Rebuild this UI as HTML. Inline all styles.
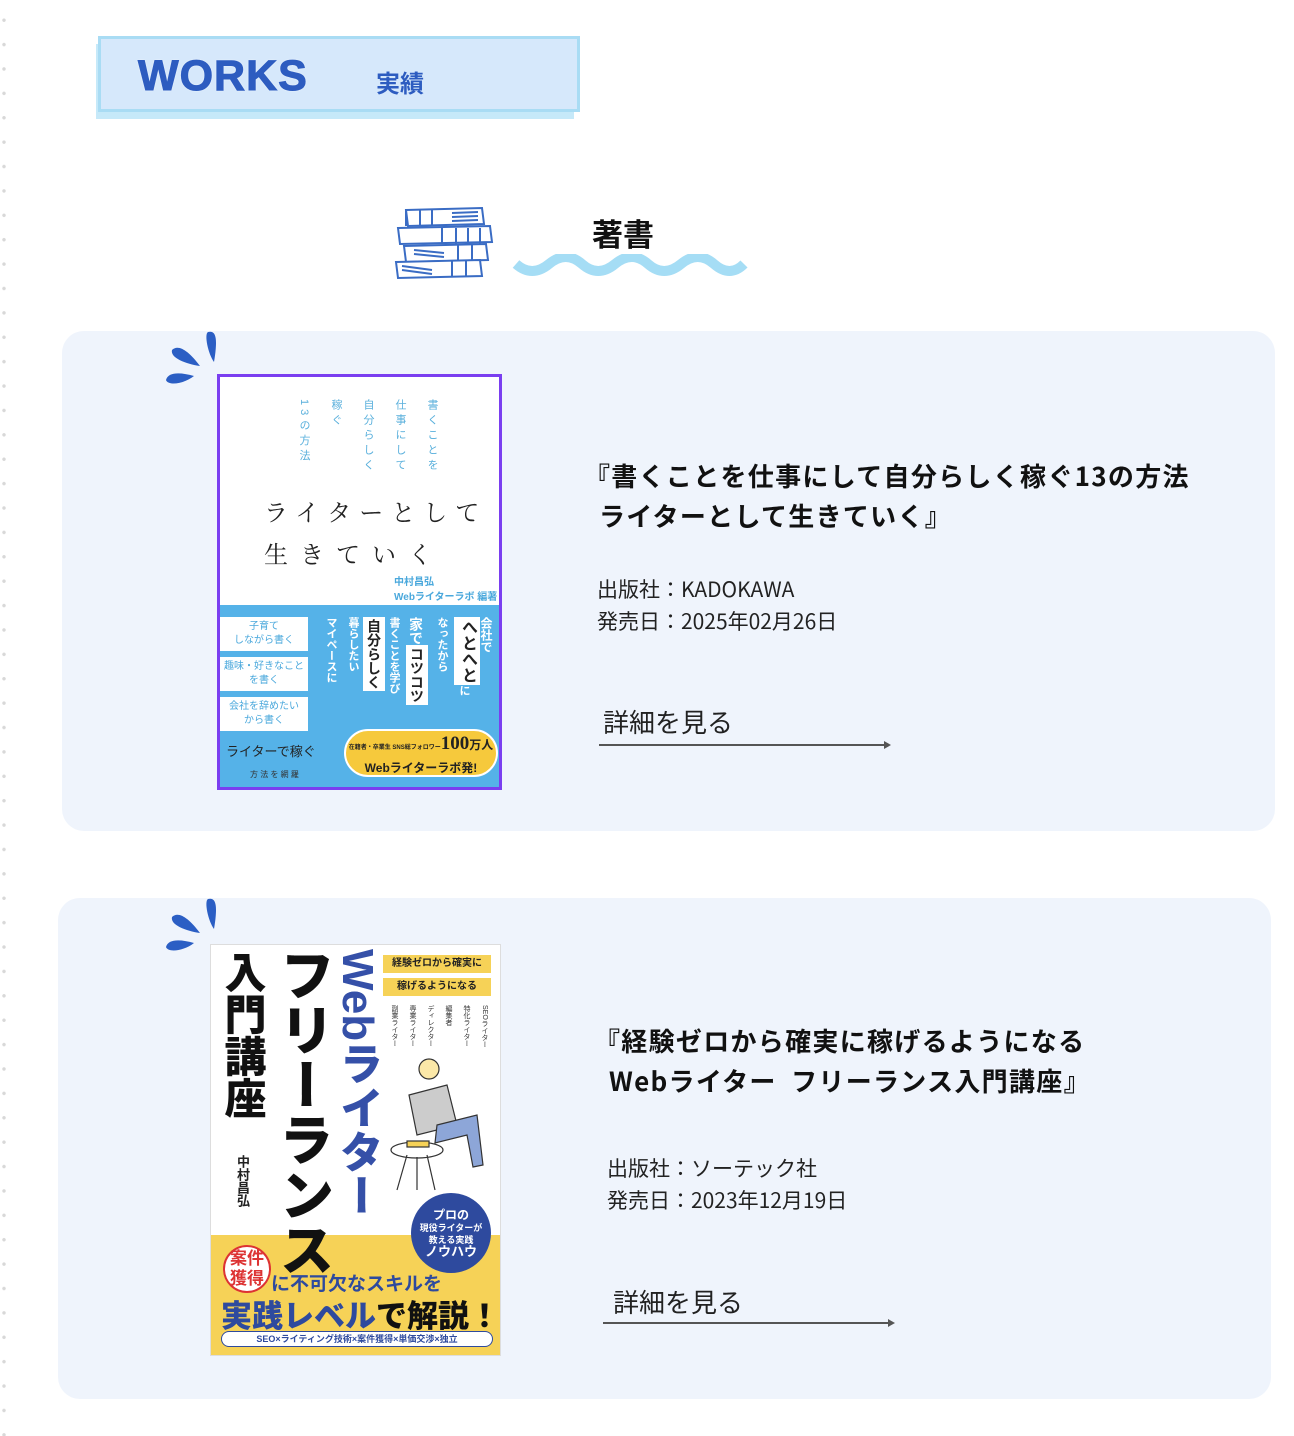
<!DOCTYPE html>
<html><head><meta charset="utf-8"><style>
*{margin:0;padding:0;box-sizing:border-box}
body{width:1294px;height:1436px;background:#fff;position:relative;overflow:hidden;font-family:"Liberation Sans","Noto Sans CJK JP",sans-serif;color:#222}
.a{position:absolute}
.dots{left:2px;top:0;width:4px;height:1436px;background:radial-gradient(circle,#d8d8d8 1.5px,transparent 2px) 0 8px/4px 24.4px repeat-y}
.card{background:#eff4fc;border-radius:22px}
.v{writing-mode:vertical-rl;white-space:nowrap}
.ttl{font-size:26px;font-weight:bold;line-height:40px;color:#111;letter-spacing:1.3px;font-family:"Noto Sans CJK JP",sans-serif}
.info{font-size:21px;line-height:32px;color:#222;font-family:"Noto Sans CJK JP",sans-serif}
.more{font-size:26px;color:#222;font-family:"Noto Sans CJK JP",sans-serif}
.line{height:2px;background:#555}
.line:after{content:"";position:absolute;right:-2px;top:-3px;border-left:7px solid #555;border-top:4px solid transparent;border-bottom:4px solid transparent}
.l2{padding-left:15px}
</style></head><body>
<div class="a dots"></div>
<div class="a" style="left:96px;top:44px;width:478px;height:75px;background:#aee0f6;opacity:.7"></div>
<div class="a" style="left:98px;top:36px;width:482px;height:76px;background:#d6e8fb;border:3px solid #a9dcf4"></div>
<div class="a" style="left:138px;top:52px;font-size:43px;font-weight:bold;color:#2d5cc0;letter-spacing:1px;-webkit-text-stroke:1px #2d5cc0;text-shadow:0 0 2px #fff">WORKS</div>
<div class="a" style="left:376px;top:64px;font-size:24px;font-weight:bold;color:#2d5cc0">実績</div>
<svg class="a" style="left:392px;top:204px" width="106" height="76" viewBox="0 0 106 76" fill="#fff" stroke="#3a6cc4" stroke-width="2">
<path d="M14 6 L90 4 L92 20 L16 22 Z"/><path d="M14 6 L14 22"/><path d="M28 6v16M40 6v16M60 9l26-1M60 13l26-1M60 17l26-1"/>
<path d="M6 24 L98 22 L100 38 L8 40 Z"/><path d="M50 24v16M64 24v16M76 24v16M88 24v16"/>
<path d="M12 42 L94 40 L96 56 L14 58 Z"/><path d="M22 46l30 3M22 50l30 3M66 41v16M80 41v16"/>
<path d="M4 58 L88 56 L90 72 L6 74 Z"/><path d="M10 62l30 4M10 66l30 4M60 57v16M74 57v16"/>
</svg>
<div class="a" style="left:592px;top:210px;font-size:31px;font-weight:bold;color:#111">著書</div>
<svg class="a" style="left:512px;top:254px" width="236" height="28" viewBox="0 0 236 28"><path d="M4 10 Q20 24 37 10 T70 10 T103 10 T136 10 T169 10 T202 10 T232 10" fill="none" stroke="#a5ddf5" stroke-width="10"/></svg>

<div class="a card" style="left:62px;top:331px;width:1213px;height:500px"></div>
<svg class="a" style="left:162px;top:330px" width="60" height="60" viewBox="0 0 60 60" fill="#2b5ec4"><path d="M46 2c8-2 10 6 6 30c-6-8-10-28-6-30z"/><path d="M10 20c6-6 16 0 28 16c-14-2-30-8-28-16z"/><path d="M4 50c2-8 14-8 28-4c-10 8-26 10-28 4z"/></svg>
<div class="a" style="left:217px;top:374px;width:285px;height:416px;border:3px solid #7a3ef0;background:#fff;overflow:hidden">
 <div class="a v" style="left:68px;top:22px;font-size:11px;color:#5ab0dc;line-height:32px;letter-spacing:4px">書くことを<br>仕事にして<br>自分らしく<br>稼ぐ<br>13の方法</div>
 <div class="a" style="left:44px;top:116px;font-size:24px;letter-spacing:8px;color:#222;font-family:'Noto Serif CJK SC',serif">ライターとして</div>
 <div class="a" style="left:44px;top:158px;font-size:24px;letter-spacing:12px;color:#222;font-family:'Noto Serif CJK SC',serif">生きていく</div>
 <div class="a" style="left:174px;top:198px;font-size:10px;font-weight:bold;color:#4aa8dc;line-height:15px">中村昌弘<br>Webライターラボ 編著</div>
 <div class="a" style="left:0;top:228px;width:285px;height:190px;background:#55b2e8"></div>
 <div class="a" style="left:0;top:240px;width:88px;height:34px;background:#fff;font-size:10px;color:#4aa8dc;text-align:center;line-height:14px;padding-top:3px">子育て<br>しながら書く</div>
 <div class="a" style="left:0;top:280px;width:88px;height:34px;background:#fff;font-size:10px;color:#4aa8dc;text-align:center;line-height:14px;padding-top:3px">趣味・好きなこと<br>を書く</div>
 <div class="a" style="left:0;top:320px;width:88px;height:34px;background:#fff;font-size:10px;color:#4aa8dc;text-align:center;line-height:14px;padding-top:3px">会社を辞めたい<br>から書く</div>
 <div class="a" style="left:6px;top:364px;font-size:13px;color:#222">ライターで稼ぐ</div>
 <div class="a" style="left:30px;top:392px;font-size:8px;color:#333">方 法 を 網 羅</div>
 <div class="a v" style="left:100px;top:240px;font-size:11px;color:#fff;line-height:22px;font-weight:bold">暮らしたい　<br>マイペースに<br></div>
 <div class="a v" style="left:143px;top:240px;font-size:14px;font-weight:bold;background:#fff;color:#222;padding:2px 1px">自分らしく</div>
 <div class="a v" style="left:166px;top:240px;font-size:11px;color:#fff;font-weight:bold">書くことを学び</div>
 <div class="a v" style="left:186px;top:240px;font-size:14px;font-weight:bold;color:#fff">家で</div>
 <div class="a v" style="left:186px;top:268px;font-size:14px;font-weight:bold;background:#fff;color:#222;padding:2px 1px">コツコツ</div>
 <div class="a v" style="left:214px;top:240px;font-size:11px;color:#fff;font-weight:bold">なったから</div>
 <div class="a v" style="left:234px;top:240px;font-size:16px;font-weight:bold;background:#fff;color:#222;padding:2px 1px">へとへと</div>
 <div class="a v" style="left:236px;top:308px;font-size:11px;color:#fff;font-weight:bold">に</div>
 <div class="a v" style="left:258px;top:240px;font-size:12px;color:#fff;font-weight:bold">会社で</div>
 <div class="a" style="left:124px;top:352px;width:154px;height:48px;border-radius:24px;background:#f6c93c;border:2px solid #fff;text-align:center;font-size:12px;font-weight:bold;padding-top:3px;line-height:20px;white-space:nowrap"><span style="font-size:6px">在籍者・卒業生 SNS総フォロワー</span><span style="font-size:19px;font-family:'Liberation Serif',serif">100</span>万人<br>Webライターラボ発!</div>
</div>
<div class="a ttl" style="left:584px;top:456px">『書くことを仕事にして自分らしく稼ぐ13の方法<br><span class="l2">ライターとして生きていく』</span></div>
<div class="a info" style="left:597px;top:573px">出版社：KADOKAWA<br>発売日：2025年02月26日</div>
<div class="a more" style="left:603px;top:703px">詳細を見る</div>
<div class="a line" style="left:599px;top:744px;width:290px"></div>

<div class="a card" style="left:58px;top:898px;width:1213px;height:501px"></div>
<svg class="a" style="left:162px;top:897px" width="60" height="60" viewBox="0 0 60 60" fill="#2b5ec4"><path d="M46 2c8-2 10 6 6 30c-6-8-10-28-6-30z"/><path d="M10 20c6-6 16 0 28 16c-14-2-30-8-28-16z"/><path d="M4 50c2-8 14-8 28-4c-10 8-26 10-28 4z"/></svg>
<div class="a" style="left:210px;top:944px;width:291px;height:412px;background:#fff;border:1px solid #ddd;overflow:hidden">
 <div class="a" style="left:0;top:290px;width:291px;height:122px;background:#f6d257"></div>
 <div class="a v" style="left:8px;top:6px;font-size:42px;font-weight:900;color:#111;line-height:46px">入門講座</div>
 <div class="a v" style="left:60px;top:2px;font-size:55px;font-weight:900;color:#111;line-height:62px">フリーランス</div>
 <div class="a v" style="left:122px;top:4px;font-size:44px;font-weight:900;color:#3550a8;line-height:48px">Webライター</div>
 <div class="a v" style="left:22px;top:210px;font-size:13px;font-weight:bold;color:#222">中村昌弘</div>
 <div class="a" style="left:172px;top:10px;width:108px;height:18px;background:#f6d257;font-size:10px;font-weight:bold;text-align:center;line-height:18px">経験ゼロから確実に</div>
 <div class="a" style="left:172px;top:33px;width:108px;height:18px;background:#f6d257;font-size:10px;font-weight:bold;text-align:center;line-height:18px">稼げるようになる</div>
 <div class="a" style="left:178px;top:60px;width:100px;height:60px;">
  <div class="a v" style="right:0;top:0;font-size:7px;color:#333">SEOライター</div>
  <div class="a v" style="right:18px;top:0;font-size:7px;color:#333">特化ライター</div>
  <div class="a v" style="right:36px;top:0;font-size:7px;color:#333">編集者</div>
  <div class="a v" style="right:54px;top:0;font-size:7px;color:#333">ディレクター</div>
  <div class="a v" style="right:72px;top:0;font-size:7px;color:#333">専業ライター</div>
  <div class="a v" style="right:90px;top:0;font-size:7px;color:#333">副業ライター</div>
 </div>
 <svg class="a" style="left:176px;top:110px" width="110" height="140" viewBox="0 0 110 140" fill="none" stroke="#333" stroke-width="1.2"><circle cx="42" cy="14" r="10" fill="#fbe8a8"/><path d="M22 40 L60 30 L70 70 L30 80 Z" fill="#ccc"/><path d="M50 70 L90 60 L96 110 L86 112 L80 80 L48 88 Z" fill="#8da6d8"/><ellipse cx="30" cy="95" rx="26" ry="8" fill="#fff"/><path d="M20 100 L10 135M40 100 L48 135M30 102 L30 135"/><rect x="20" y="86" width="22" height="6" fill="#f6d257"/></svg>
 <div class="a" style="left:200px;top:248px;width:80px;height:80px;border-radius:50%;background:#2e4a9e;color:#fff;text-align:center;font-size:9px;font-weight:bold;line-height:12px;padding-top:16px"><span style="font-size:12px">プロの</span><br>現役ライターが<br>教える実践<br><span style="font-size:13px">ノウハウ</span></div>
 <div class="a" style="left:12px;top:300px;width:48px;height:48px;border-radius:50%;background:#fff;border:2px solid #d33;color:#d33;font-size:17px;font-weight:bold;line-height:20px;text-align:center;padding-top:2px">案件<br>獲得</div>
 <div class="a" style="left:60px;top:324px;font-size:19px;font-weight:bold;color:#2e4a9e">に不可欠なスキルを</div>
 <div class="a" style="left:10px;top:346px;font-size:31px;font-weight:900;color:#2e4a9e;white-space:nowrap">実践レベル<span style="color:#111">で解説！</span></div>
 <div class="a" style="left:10px;top:386px;width:272px;height:16px;border-radius:8px;background:#fff;border:1px solid #2e4a9e;font-size:9px;font-weight:bold;text-align:center;line-height:14px;color:#2e4a9e">SEO×ライティング技術×案件獲得×単価交渉×独立</div>
</div>
<div class="a ttl" style="left:594px;top:1021px">『経験ゼロから確実に稼げるようになる<br><span class="l2">Webライター&nbsp;&nbsp;フリーランス入門講座』</span></div>
<div class="a info" style="left:607px;top:1152px">出版社：ソーテック社<br>発売日：2023年12月19日</div>
<div class="a more" style="left:613px;top:1283px">詳細を見る</div>
<div class="a line" style="left:603px;top:1322px;width:290px"></div>
</body></html>
